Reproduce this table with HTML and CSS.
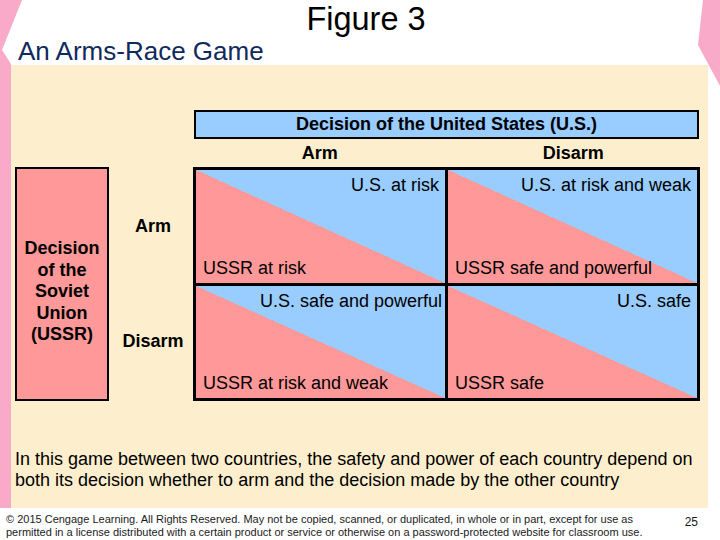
FILE: index.html
```html
<!DOCTYPE html>
<html lang="en">
<head>
<meta charset="utf-8">
<title>Figure 3 – An Arms-Race Game</title>
<link rel="stylesheet" href="styles.css">
</head>
<body>
<div class="slide">
  <svg class="deco deco-tl" width="24" height="66" viewBox="0 0 24 66" aria-hidden="true">
    <polygon points="0,0 22,0 2,50 11,64 11,66 0,66" />
  </svg>
  <svg class="deco deco-tr" width="22" height="88" viewBox="0 0 22 88" aria-hidden="true">
    <polygon points="5,0 22,0 22,86 0,45" />
  </svg>

  <header class="head">
    <h1 class="fig-title">Figure 3</h1>
    <h2 class="subtitle">An Arms-Race Game</h2>
  </header>

  <div class="strip"></div>

  <main class="panel">
    <div class="game">
      <div class="us-head">Decision of the United States (U.S.)</div>
      <div class="col-label col-arm">Arm</div>
      <div class="col-label col-disarm">Disarm</div>
      <div class="ussr-head"><span>Decision<br>of the<br>Soviet<br>Union<br>(USSR)</span></div>
      <div class="row-labels">
        <div class="row-label">Arm</div>
        <div class="row-label">Disarm</div>
      </div>
      <div class="matrix">
        <div class="cell">
          <span class="us">U.S. at risk</span>
          <span class="ussr">USSR at risk</span>
        </div>
        <div class="cell">
          <span class="us">U.S. at risk and weak</span>
          <span class="ussr">USSR safe and powerful</span>
        </div>
        <div class="cell">
          <span class="us us-tight">U.S. safe and powerful</span>
          <span class="ussr">USSR at risk and weak</span>
        </div>
        <div class="cell">
          <span class="us">U.S. safe</span>
          <span class="ussr">USSR safe</span>
        </div>
      </div>
    </div>
    <p class="caption">In this game between two countries, the safety and power of each country depend on<br>both its decision whether to arm and the decision made by the other country</p>
  </main>

  <footer class="foot">
    <p class="legal">© 2015 Cengage Learning. All Rights Reserved. May not be copied, scanned, or duplicated, in whole or in part, except for use as<br>permitted in a license distributed with a certain product or service or otherwise on a password-protected website for classroom use.</p>
    <span class="page">25</span>
  </footer>
</div>
</body>
</html>
```

FILE: styles.css
```css
* { box-sizing: border-box; }

html, body {
  margin: 0;
  padding: 0;
  background: #ffffff;
}

body {
  font-family: "Liberation Sans", Arial, sans-serif;
  color: #000;
}

.slide {
  position: relative;
  width: 720px;
  height: 540px;
  overflow: hidden;
  background: #ffffff;
  display: grid;
  grid-template-columns: 11px 697px 12px;
  grid-template-rows: 65px 443px 32px;
}

.deco {
  position: absolute;
  top: 0;
  fill: #f8aac8;
  z-index: 2;
}
.deco-tl { left: 0; }
.deco-tr { right: 0; }

/* header */
.head {
  grid-column: 1 / 4;
  grid-row: 1;
  padding-top: 3px;
  display: flex;
  flex-direction: column;
}

.fig-title {
  margin: 0;
  padding-left: 12px;
  text-align: center;
  font-weight: normal;
  font-size: 32.5px;
  line-height: 32px;
  color: #000;
}

.subtitle {
  margin: 4px 0 0;
  padding-left: 18px;
  font-weight: normal;
  font-size: 26px;
  line-height: 25px;
  color: #0f2a5c;
}

.strip {
  grid-column: 1;
  grid-row: 2;
  background: #f8aac8;
}

/* beige panel */
.panel {
  grid-column: 2;
  grid-row: 2;
  background: #fdefcd;
  padding: 45px 0 0 4px;
}

.game {
  display: grid;
  grid-template-columns: 94px 84px 253.5px 253.5px;
  grid-template-rows: 29px 28px 234px;
}

.us-head {
  grid-column: 3 / 5;
  grid-row: 1;
  margin: 0 1px;
  background: #99ccff;
  border: 2px solid #000;
  display: flex;
  align-items: center;
  justify-content: center;
  font-weight: bold;
  font-size: 18px;
}

.col-label {
  grid-row: 2;
  display: flex;
  align-items: center;
  justify-content: center;
  font-weight: bold;
  font-size: 18px;
}
.col-arm { grid-column: 3; }
.col-disarm { grid-column: 4; }

.ussr-head {
  grid-column: 1;
  grid-row: 3;
  background: #ff9999;
  border: 2px solid #000;
  display: flex;
  align-items: center;
  justify-content: center;
  padding-top: 16px;
  text-align: center;
  font-weight: bold;
  font-size: 18px;
  line-height: 21.5px;
}

.row-labels {
  grid-column: 2;
  grid-row: 3;
  display: grid;
  grid-template-rows: 1fr 1fr;
  gap: 3px;
  padding: 3px 0 3px 4px;
}

.row-label {
  display: flex;
  align-items: center;
  justify-content: center;
  font-weight: bold;
  font-size: 18px;
}

.matrix {
  grid-column: 3 / 5;
  grid-row: 3;
  background: #000;
  padding: 3px;
  display: grid;
  grid-template-columns: 1fr 1fr;
  grid-template-rows: 1fr 1fr;
  gap: 3px;
}

.cell {
  background: linear-gradient(to top right, #ff9999 50%, #99ccff 50%);
  display: flex;
  flex-direction: column;
  justify-content: space-between;
  padding: 5px 6px 5px 7px;
  font-size: 18px;
  line-height: 20px;
  white-space: nowrap;
}

.cell .us { align-self: flex-end; }
.cell .us-tight { margin-right: -3px; }
.cell .ussr { align-self: flex-start; }

.caption {
  margin: 48px 0 0;
  font-size: 18px;
  line-height: 21px;
  white-space: nowrap;
}

/* footer */
.foot {
  grid-column: 1 / 4;
  grid-row: 3;
  display: flex;
  justify-content: space-between;
  align-items: flex-start;
  padding: 5px 22px 0 6px;
  color: #1a1a1a;
}

.legal {
  margin: 0;
  font-size: 11px;
  line-height: 13px;
  white-space: nowrap;
}

.page {
  margin-top: 2px;
  font-size: 12px;
  line-height: 14px;
}
```
